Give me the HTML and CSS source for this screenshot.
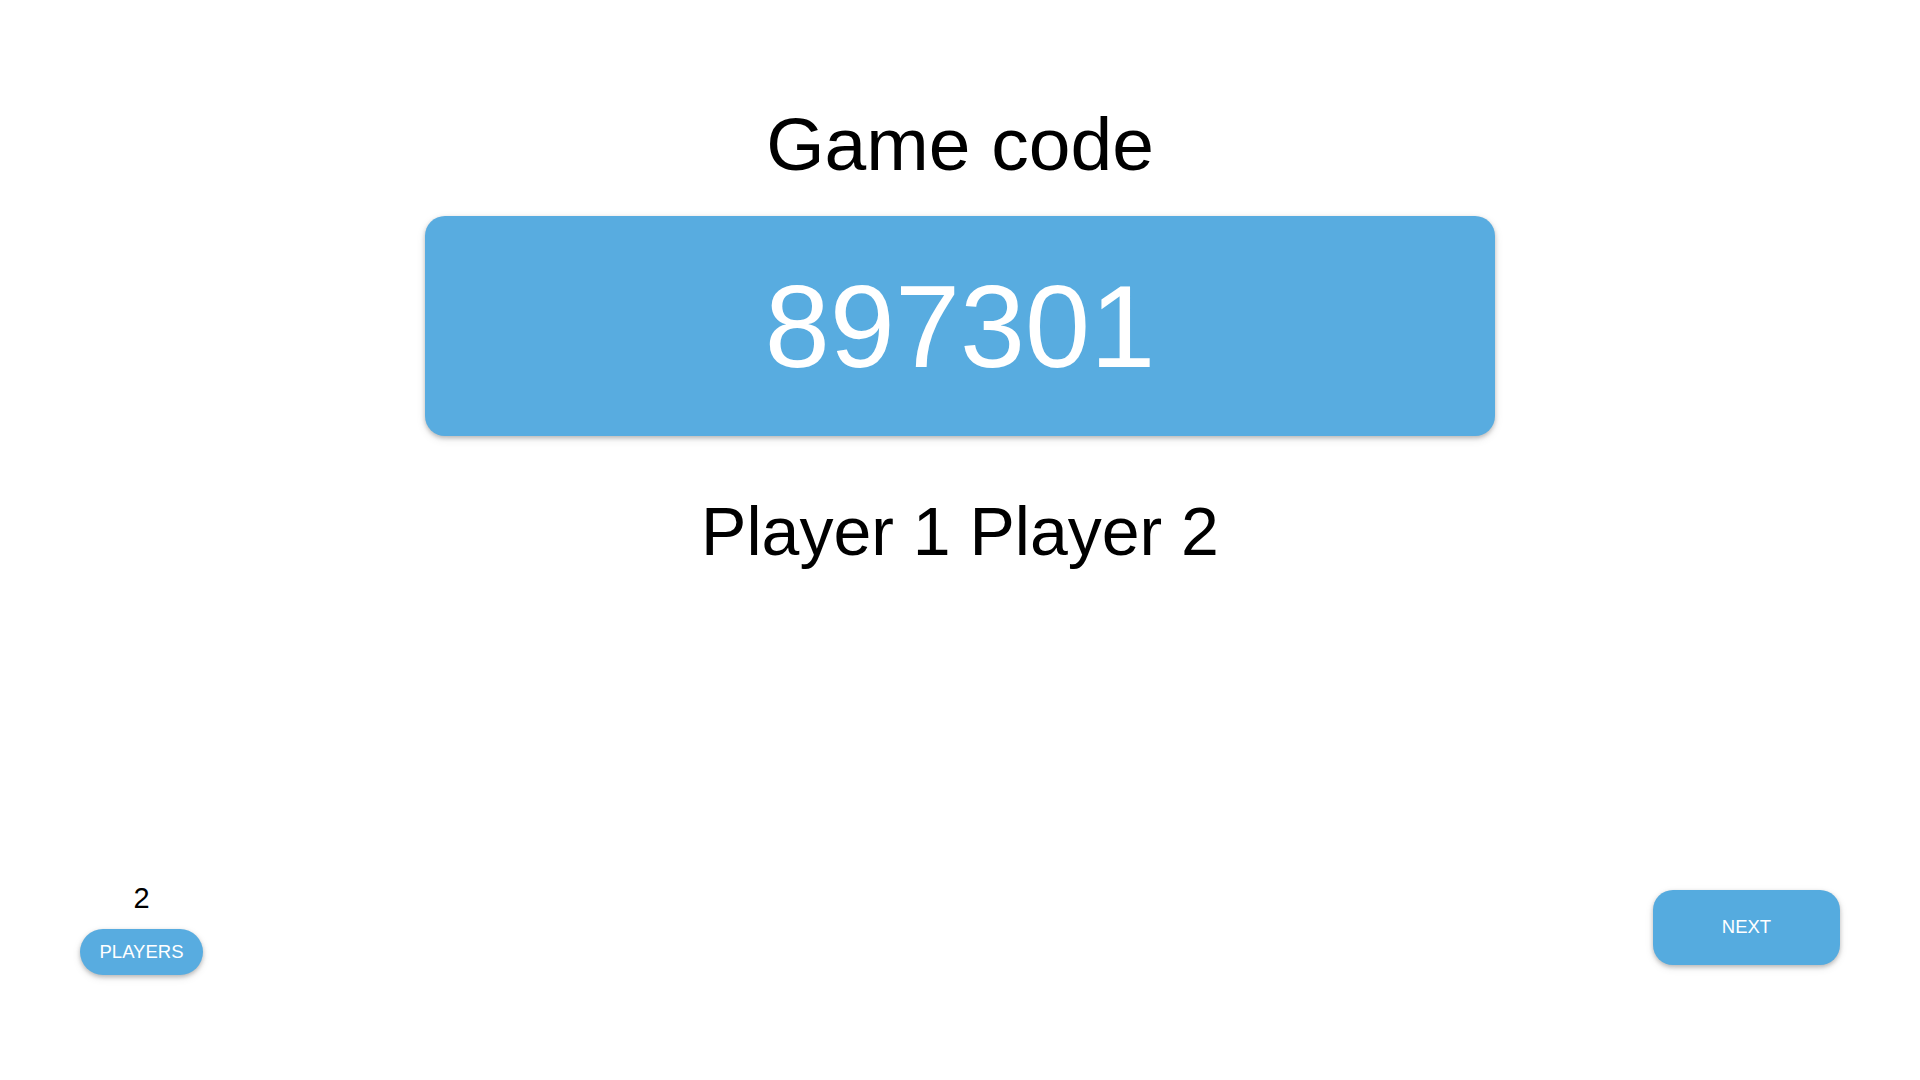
FILE: index.html
```html
<!DOCTYPE html>
<html lang="en">
<head>
<meta charset="utf-8">
<title>Game code</title>
<link rel="stylesheet" href="styles.css">
</head>
<body>
<div class="page">
  <main class="main">
    <h1 class="title">Game code</h1>
    <div class="code-box"><span class="code">897301</span></div>
    <div class="players">Player 1 Player 2</div>
  </main>
  <footer class="footer">
    <div class="count-col">
      <div class="count">2</div>
      <button class="btn btn-players">PLAYERS</button>
    </div>
    <button class="btn btn-next">NEXT</button>
  </footer>
</div>
</body>
</html>
```
FILE: styles.css
```css
* { box-sizing: border-box; }
html, body {
  margin: 0;
  padding: 0;
  background: #ffffff;
  font-family: "Liberation Sans", Arial, sans-serif;
  color: #000;
}
.page {
  min-height: 100vh;
  display: flex;
  flex-direction: column;
}
.main {
  display: flex;
  flex-direction: column;
  align-items: center;
  padding-top: 107px;
}
.title {
  margin: 0;
  font-size: 75px;
  line-height: 1;
  font-weight: 400;
}
.code-box {
  margin-top: 34px;
  width: 1070px;
  height: 220px;
  border-radius: 20px;
  background: #58ace0;
  display: flex;
  align-items: center;
  justify-content: center;
  box-shadow: 0 2px 4px rgba(0,0,0,0.22), 0 3px 10px rgba(0,0,0,0.10);
}
.code {
  color: #fff;
  font-size: 117px;
  line-height: 1;
}
.players {
  margin-top: 61px;
  font-size: 68px;
  line-height: 1;
}
.footer {
  margin-top: auto;
  display: flex;
  justify-content: space-between;
  align-items: flex-end;
  padding: 0 80px 105px;
}
.count-col {
  display: flex;
  flex-direction: column;
  align-items: center;
}
.count {
  font-size: 29px;
  line-height: 1;
  margin-bottom: 16px;
}
.btn {
  border: none;
  background: #58ace0;
  color: #fff;
  font-family: "Liberation Sans", Arial, sans-serif;
  font-size: 18.5px;
  line-height: 1;
  cursor: pointer;
  box-shadow: 0 2px 4px rgba(0,0,0,0.22), 0 3px 8px rgba(0,0,0,0.10);
}
.btn-players {
  height: 46px;
  width: 123px;
  border-radius: 23px;
  padding: 0;
}
.btn-next {
  width: 187px;
  height: 75px;
  border-radius: 20px;
  margin-bottom: 10px;
  background: #55abdf;
}
```
